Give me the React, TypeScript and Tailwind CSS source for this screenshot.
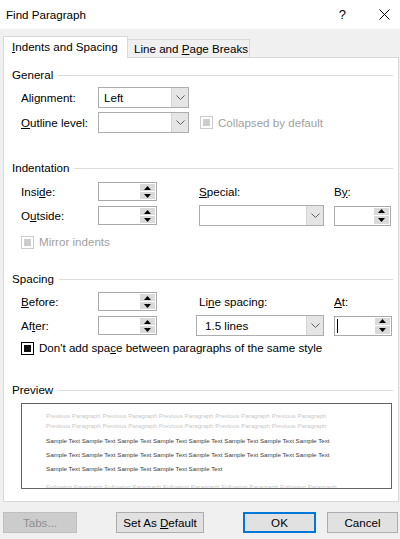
import React from "react";

const Chevron = () => (
  <svg width="9" height="5" viewBox="0 0 9 5" fill="none">
    <path d="M0.5 0.5 L4.5 4.5 L8.5 0.5" stroke="#606060" strokeWidth="1" />
  </svg>
);

const Dropdown = ({ w, h = 21, value = "", pl = 5 }: { w: number; h?: number; value?: string; pl?: number }) => (
  <div className="flex border border-[#adadad] bg-white" style={{ width: w, height: h }}>
    <div className="flex-1 flex items-center text-black" style={{ paddingLeft: pl }}>
      {value}
    </div>
    <div className="w-[17px] bg-[#e5e5e5] border-l border-[#d4d4d4] flex items-center justify-center">
      <Chevron />
    </div>
  </div>
);

const TriUp = () => (
  <svg width="7" height="4" viewBox="0 0 7 4">
    <path d="M0 4 L3.5 0 L7 4 Z" fill="#000" />
  </svg>
);
const TriDown = () => (
  <svg width="7" height="4" viewBox="0 0 7 4">
    <path d="M0 0 L3.5 4 L7 0 Z" fill="#000" />
  </svg>
);

const Spin = ({ w = 59, h = 19, cursor = false }: { w?: number; h?: number; cursor?: boolean }) => (
  <div className="flex border border-[#a9a9a9] bg-white" style={{ width: w, height: h }}>
    <div className="flex-1 flex items-center pl-[2px]">
      {cursor && <div className="w-px h-[14px] bg-black" />}
    </div>
    <div className="w-[15px] mr-[1px] my-[1px] flex flex-col gap-px">
      <div className="flex-1 bg-[#dadada] flex items-center justify-center">
        <TriUp />
      </div>
      <div className="flex-1 bg-[#dadada] flex items-center justify-center">
        <TriDown />
      </div>
    </div>
  </div>
);

const Heading = ({ children, mt }: { children: React.ReactNode; mt: string }) => (
  <div className={`flex items-center h-[16px] pl-[8px] pr-[5px] ${mt}`}>
    <span className="text-black">{children}</span>
    <div className="flex-1 h-px bg-[#dcdcdc] ml-[5px]" />
  </div>
);

const Label = ({ children, w }: { children: React.ReactNode; w: number }) => (
  <div className="shrink-0 text-black whitespace-nowrap" style={{ width: w }}>
    {children}
  </div>
);

export default function App() {
  const sample8 = Array(8).fill("Sample Text").join(" ");
  const sample5 = Array(5).fill("Sample Text").join(" ");
  const prev = Array(5).fill("Previous Paragraph").join(" ");
  const follow = Array(5).fill("Following Paragraph").join(" ");

  return (
    <div className="w-[400px] h-[539px] bg-[#f0f0f0] overflow-hidden font-['Liberation_Sans',Arial,sans-serif] text-[11.6px] leading-none text-black">
      {/* Title bar */}
      <div className="h-[29px] bg-white flex items-center pl-[6px]">
        <span className="text-[11.6px]">Find Paragraph</span>
        <span className="ml-auto text-[13px] mr-[33px]">?</span>
        <svg width="11" height="11" viewBox="0 0 11 11" className="mr-[10px]">
          <path d="M0.5 0.5 L10.5 10.5 M10.5 0.5 L0.5 10.5" stroke="#000" strokeWidth="1" />
        </svg>
      </div>

      {/* Tabs */}
      <div className="h-[28px] pl-[3px] flex items-end">
        <div className="relative z-10 w-[125px] h-[22px] -mb-px bg-white border border-[#d9d9d9] border-b-0 flex items-center pl-[8px] pb-[1px] whitespace-nowrap">
          <span>
            <u>I</u>ndents and Spacing
          </span>
        </div>
        <div className="w-[122px] h-[18px] bg-[#f0f0f0] border border-[#d9d9d9] border-l-0 border-b-0 flex items-center pl-[6px] whitespace-nowrap">
          <span>
            Line and <u>P</u>age Breaks
          </span>
        </div>
      </div>

      {/* Panel */}
      <div className="ml-[3px] w-[396px] h-[445px] bg-white border border-[#d9d9d9] flex flex-col">
        <Heading mt="mt-[9px]">General</Heading>
        <div className="mt-[4px] h-[21px] pl-[17px] flex items-center">
          <Label w={77}>
            Ali<u>g</u>nment:
          </Label>
          <Dropdown w={91} value="Left" />
        </div>
        <div className="mt-[4px] h-[21px] pl-[17px] flex items-center">
          <Label w={77}>
            <u>O</u>utline level:
          </Label>
          <Dropdown w={91} />
          <div className="ml-[11px] w-[13px] h-[13px] border border-[#cccccc] p-[2px]">
            <div className="w-full h-full bg-[#cccccc]" />
          </div>
          <span className="ml-[5px] text-[#a0a0a0] whitespace-nowrap">Collapsed by default</span>
        </div>

        <Heading mt="mt-[27px]">Indentation</Heading>
        <div className="mt-[6px] h-[19px] pl-[17px] flex items-center">
          <Label w={77}>
            Insi<u>d</u>e:
          </Label>
          <Spin />
          <div className="ml-[42px]">
            <Label w={135}>
              <u>S</u>pecial:
            </Label>
          </div>
          <Label w={40}>
            B<u>y</u>:
          </Label>
        </div>
        <div className="mt-[4px] h-[21px] pl-[17px] flex items-center">
          <Label w={77}>
            O<u>u</u>tside:
          </Label>
          <Spin />
          <div className="ml-[42px]">
            <Dropdown w={125} />
          </div>
          <div className="ml-[10px]">
            <Spin w={57} h={20} />
          </div>
        </div>
        <div className="mt-[8px] h-[16px] pl-[17px] flex items-center">
          <div className="w-[13px] h-[13px] border border-[#cccccc] p-[2px]">
            <div className="w-full h-full bg-[#cccccc]" />
          </div>
          <span className="ml-[5px] text-[#a0a0a0]">Mirror indents</span>
        </div>

        <Heading mt="mt-[21px]">Spacing</Heading>
        <div className="mt-[5px] h-[19px] pl-[17px] flex items-center">
          <Label w={77}>
            <u>B</u>efore:
          </Label>
          <Spin />
          <div className="ml-[42px]">
            <Label w={135}>
              Li<u>n</u>e spacing:
            </Label>
          </div>
          <Label w={40}>
            <u>A</u>t:
          </Label>
        </div>
        <div className="mt-[4px] h-[21px] pl-[17px] flex items-center">
          <Label w={77}>
            Af<u>t</u>er:
          </Label>
          <Spin />
          <div className="ml-[39px]">
            <Dropdown w={128} value="1.5 lines" pl={8} />
          </div>
          <div className="ml-[10px]">
            <Spin w={58} h={20} cursor />
          </div>
        </div>
        <div className="mt-[4px] h-[16px] pl-[17px] flex items-center">
          <div className="w-[13px] h-[13px] border border-black p-[2px]">
            <div className="w-full h-full bg-[#111]" />
          </div>
          <span className="ml-[5px] whitespace-nowrap">
            Don't add spa<u>c</u>e between paragraphs of the same style
          </span>
        </div>

        <Heading mt="mt-[26px]">Preview</Heading>
        <div className="mt-[5px] ml-[17px] w-[371px] h-[86px] border border-[#646464] overflow-hidden pl-[24px] text-[6.2px] whitespace-nowrap">
          <div className="pt-[7px] leading-[10px] text-[#c8c8c8]">
            <div>{prev}</div>
            <div>{prev}</div>
          </div>
          <div className="mt-[3px] leading-[14px] text-[#3c3c3c]">
            <div>{sample8}</div>
            <div>{sample8}</div>
            <div>{sample5}</div>
          </div>
          <div className="mt-[6px] leading-[10px] text-[#c8c8c8]">{follow}</div>
        </div>
      </div>

      {/* Buttons */}
      <div className="mt-[10px] flex">
        <div className="ml-[3px] w-[74px] h-[21px] bg-[#cccccc] border border-[#bfbfbf] text-[#8f8f8f] flex items-center justify-center">
          Tabs...
        </div>
        <div className="ml-[39px] w-[88px] h-[21px] bg-[#e1e1e1] border border-[#adadad] flex items-center justify-center whitespace-nowrap">
          <span>
            Set As <u>D</u>efault
          </span>
        </div>
        <div className="ml-[39px] w-[73px] h-[21px] bg-[#e1e1e1] border-2 border-[#0078d7] flex items-center justify-center">
          OK
        </div>
        <div className="ml-[11px] w-[71px] h-[21px] bg-[#e1e1e1] border border-[#adadad] flex items-center justify-center">
          Cancel
        </div>
      </div>
    </div>
  );
}
